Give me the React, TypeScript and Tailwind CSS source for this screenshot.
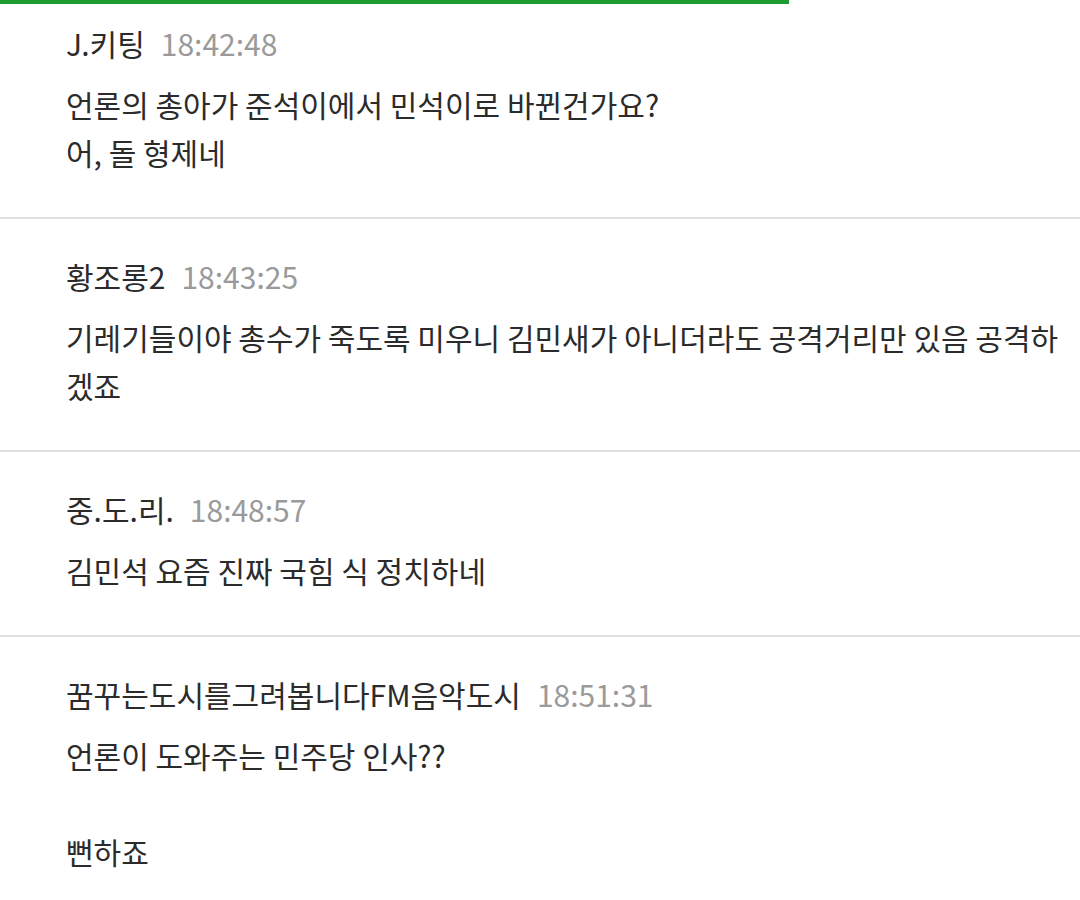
import React from "react";

type Comment = {
  name: string;
  time: string;
  lines: string[];
};

const comments: Comment[] = [
  {
    name: "J.키팅",
    time: "18:42:48",
    lines: ["언론의 총아가 준석이에서 민석이로 바뀐건가요?", "어, 돌 형제네"],
  },
  {
    name: "황조롱2",
    time: "18:43:25",
    lines: [
      "기레기들이야 총수가 죽도록 미우니 김민새가 아니더라도 공격거리만 있음 공격하",
      "겠죠",
    ],
  },
  {
    name: "중.도.리.",
    time: "18:48:57",
    lines: ["김민석 요즘 진짜 국힘 식 정치하네"],
  },
  {
    name: "꿈꾸는도시를그려봅니다FM음악도시",
    time: "18:51:31",
    lines: ["언론이 도와주는 민주당 인사??", "", "뻔하죠"],
  },
];

function CommentItem({ comment, first }: { comment: Comment; first: boolean }) {
  return (
    <div
      className={
        first
          ? "px-[66px] pt-[15px] pb-[41px] border-b-2 border-[#e0e0e0]"
          : "px-[66px] pt-[33px] pb-[41px] border-b-2 border-[#e0e0e0]"
      }
    >
      <div className="flex items-center gap-[16px] h-[48px]">
        <span className="text-[30px] text-[#2b2b2b]">{comment.name}</span>
        <span className="text-[30px] text-[#9a9a9a]">{comment.time}</span>
      </div>
      <div className="mt-[13px] text-[30px] leading-[48px] text-[#2b2b2b]">
        {comment.lines.map((line, i) => (
          <div key={i} className="h-[48px] whitespace-nowrap">
            {line}
          </div>
        ))}
      </div>
    </div>
  );
}

export default function App() {
  return (
    <div
      className="w-[1080px] h-[900px] overflow-hidden bg-white"
      style={{ fontFamily: '"Noto Sans CJK KR", "Noto Sans", sans-serif' }}
    >
      <div className="w-[789px] h-[4px] bg-[#1f9a2e]"></div>
      {comments.map((c, i) => (
        <CommentItem key={i} comment={c} first={i === 0} />
      ))}
    </div>
  );
}
